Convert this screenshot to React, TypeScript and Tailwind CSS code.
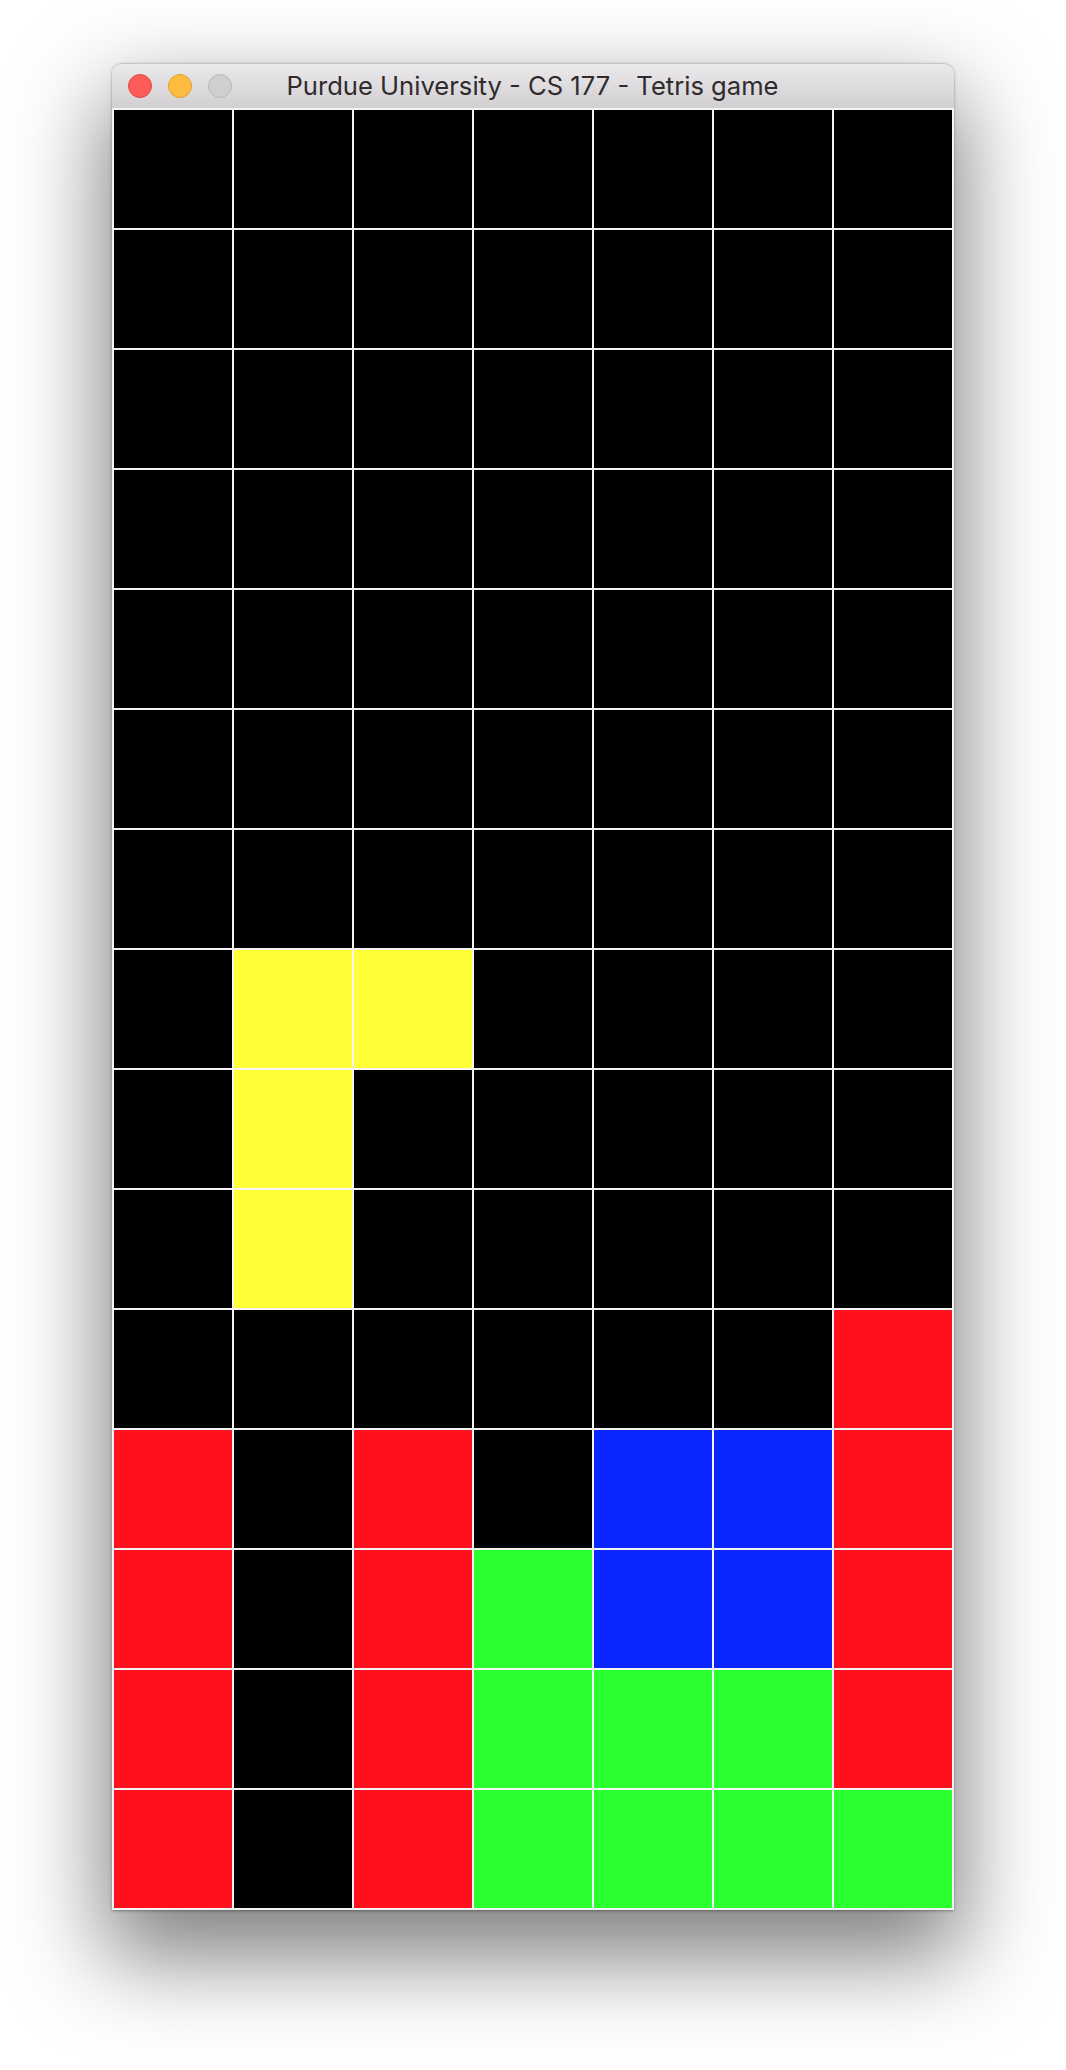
const k = "bg-black";
const r = "bg-[#ff101f]";
const y = "bg-[#fffe37]";
const g = "bg-[#2aff2f]";
const b = "bg-[#0c26ff]";

const board = [
  [k, k, k, k, k, k, k],
  [k, k, k, k, k, k, k],
  [k, k, k, k, k, k, k],
  [k, k, k, k, k, k, k],
  [k, k, k, k, k, k, k],
  [k, k, k, k, k, k, k],
  [k, k, k, k, k, k, k],
  [k, y, y, k, k, k, k],
  [k, y, k, k, k, k, k],
  [k, y, k, k, k, k, k],
  [k, k, k, k, k, k, r],
  [r, k, r, k, b, b, r],
  [r, k, r, g, b, b, r],
  [r, k, r, g, g, g, r],
  [r, k, r, g, g, g, g],
];

const App = () => {
  return (
    <div className="bg-white h-[2070px] pt-[63px] pl-[112px] overflow-hidden">
      <div className="w-[842px] rounded-t-[10px] shadow-[0_40px_90px_8px_rgba(0,0,0,0.5),0_1px_3px_rgba(0,0,0,0.35)]">
        <div className="relative h-[45px] rounded-t-[10px] bg-gradient-to-b from-[#ebe9eb] to-[#d1cfd1] border-t border-[#c6c6c6] flex items-center justify-center pr-[1px]">
          <div className="absolute left-[16px] top-[10px] flex gap-[16px]">
            <div className="w-[24px] h-[24px] rounded-full bg-[#fc5b57] border border-[#e2463f]"></div>
            <div className="w-[24px] h-[24px] rounded-full bg-[#fdbc40] border border-[#e0a12e]"></div>
            <div className="w-[24px] h-[24px] rounded-full bg-[#d0cfcf] border border-[#b9b8b8]"></div>
          </div>
          <span className="text-[#2f2b2c] text-[25.6px] leading-none font-['Inter',sans-serif] whitespace-nowrap">
            Purdue University - CS 177 - Tetris game
          </span>
        </div>
        <div className="grid grid-cols-[repeat(7,118px)] auto-rows-[118px] gap-[2px] p-[2px] bg-[#f4f4f4]">
          {board.flat().map((c, i) => (
            <div key={i} className={c}></div>
          ))}
        </div>
      </div>
    </div>
  );
};

export default App;
